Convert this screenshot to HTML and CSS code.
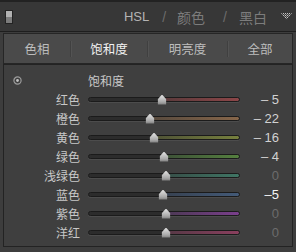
FILE: index.html
```html
<!DOCTYPE html>
<html lang="zh-CN">
<head>
    <meta charset="UTF-8">
    <meta name="viewport" content="width=device-width, initial-scale=1.0">
    <title>HSL</title>
    <link rel="stylesheet" href="styles.css">
</head>
<body>
    <!-- Panel header -->
    <div class="header">
        <span class="toggle"></span>
        <div class="title">
            <span class="active">HSL</span>
            <span class="slash first">/</span>
            <span>颜色</span>
            <span class="slash">/</span>
            <span>黑白</span>
            <svg class="collapse" width="11" height="7" viewBox="0 0 11 7">
                <defs>
                    <pattern id="dots" width="2" height="2" patternUnits="userSpaceOnUse">
                        <rect width="1" height="1" fill="#c4c4c4"/>
                        <rect x="1" y="1" width="1" height="1" fill="#8a8a8a"/>
                    </pattern>
                </defs>
                <polygon points="0,0 11,0 5.5,7" fill="url(#dots)"/>
            </svg>
        </div>
    </div>

    <!-- Tabs -->
    <div class="tabs">
        <div class="tab">色相</div>
        <div class="tab selected">饱和度</div>
        <div class="tab">明亮度</div>
        <div class="tab">全部</div>
    </div>

    <!-- Sliders -->
    <div class="panel">
        <div class="row">
            <div class="target">
                <svg width="9" height="9" viewBox="0 0 9 9">
                    <circle cx="4.5" cy="4.5" r="3.6" fill="none" stroke="#9c9c9c" stroke-width="1.2"/>
                    <circle cx="4.5" cy="4.5" r="1.4" fill="#c2c2c2"/>
                </svg>
            </div>
            <div class="group-title">饱和度</div>
            <div></div>
        </div>

        <div class="row">
            <div class="label">红色</div>
            <div class="track red" style="--pos: 73px"><span class="thumb"></span></div>
            <div class="value">– 5</div>
        </div>
        <div class="row">
            <div class="label">橙色</div>
            <div class="track orange" style="--pos: 61px"><span class="thumb"></span></div>
            <div class="value">– 22</div>
        </div>
        <div class="row">
            <div class="label">黄色</div>
            <div class="track yellow" style="--pos: 65px"><span class="thumb"></span></div>
            <div class="value">– 16</div>
        </div>
        <div class="row">
            <div class="label">绿色</div>
            <div class="track green" style="--pos: 75px"><span class="thumb"></span></div>
            <div class="value">– 4</div>
        </div>
        <div class="row">
            <div class="label">浅绿色</div>
            <div class="track aqua" style="--pos: 77px"><span class="thumb"></span></div>
            <div class="value zero">0</div>
        </div>
        <div class="row">
            <div class="label">蓝色</div>
            <div class="track blue" style="--pos: 74px"><span class="thumb"></span></div>
            <div class="value hot">–5</div>
        </div>
        <div class="row">
            <div class="label">紫色</div>
            <div class="track purple" style="--pos: 77px"><span class="thumb"></span></div>
            <div class="value zero">0</div>
        </div>
        <div class="row">
            <div class="label">洋红</div>
            <div class="track magenta" style="--pos: 77px"><span class="thumb"></span></div>
            <div class="value zero">0</div>
        </div>
    </div>
</body>
</html>
```

FILE: styles.css
```css
body {
    margin: 0;
    background-color: #3d3d3d;
    font-family: "Noto Sans CJK SC", "Liberation Sans", sans-serif;
    font-size: 12px;
    color: #c4c4c4;
}

/* header */
.header {
    height: 29px;
    border-top: 2px solid #222;
    border-bottom: 1px solid #1e1e1e;
    background-color: #373737;
    display: flex;
    align-items: center;
    justify-content: space-between;
    padding: 0 4px 0 5px;
}

.toggle {
    width: 6px;
    height: 12px;
    border: 1px solid #232323;
    background: linear-gradient(#b2b2b2 0 50%, #7c7c7c 50% 100%);
}

.title {
    display: flex;
    align-items: center;
    font-size: 14px;
    color: #7c7c7c;
}

.title .active {
    font-family: "Liberation Sans", sans-serif;
    font-size: 13px;
    color: #b4b4b4;
}

.slash {
    font-family: "Liberation Sans", sans-serif;
    margin: 0 12px 0 18px;
    color: #6c6c6c;
}

.slash.first {
    margin: 0 11px 0 13px;
}

.collapse {
    margin-left: 14px;
}

/* tabs */
.tabs {
    margin: 1px 3px 0;
    height: 29px;
    border: 1px solid #262626;
    background-color: #4a4a4a;
    display: grid;
    grid-template-columns: 66px 77px 80px 1fr;
    align-items: center;
}

.tab {
    text-align: center;
    font-size: 12.5px;
    color: #bdbdbd;
    border-left: 1px solid #404040;
    box-shadow: inset 1px 0 0 #535353;
    line-height: 16px;
}

.tab:first-child {
    border-left: none;
    box-shadow: none;
}

.tab.selected {
    color: #f2f2f2;
}

/* slider panel */
.panel {
    margin: 0 3px;
    border: 1px solid #232323;
    background-color: #3f3f3f;
    padding: 6px 13px 4px 0;
}

.row {
    display: grid;
    grid-template-columns: 76px 152px 1fr;
    column-gap: 8px;
    height: 19px;
    align-items: center;
}

.target {
    padding-left: 9px;
    display: flex;
}

.group-title {
    color: #c8c8c8;
}

.label {
    text-align: right;
    color: #c8c8c8;
}

.value {
    text-align: right;
    font-family: "Liberation Sans", sans-serif;
    font-size: 13px;
    color: #d2d2d2;
}

.value.zero {
    color: #6c6c6c;
}

.value.hot {
    color: #f4f4f4;
}

.track {
    position: relative;
    height: 3px;
    border: 1px solid #1b1b1b;
    border-radius: 3px;
    box-shadow: 0 1px 0 #4c4c4c;
    background: linear-gradient(to right, #2c2c2c 0 var(--pos), var(--c1) var(--pos), var(--c) 100%);
}

.red { --c1: #5a3a3b; --c: #8c4648; }
.orange { --c1: #574a3e; --c: #86664a; }
.yellow { --c1: #4f5236; --c: #76803e; }
.green { --c1: #3d5137; --c: #55803f; }
.aqua { --c1: #374f48; --c: #3f7564; }
.blue { --c1: #374150; --c: #435a78; }
.purple { --c1: #4c3954; --c: #7a3f8c; }
.magenta { --c1: #553845; --c: #8a3f5e; }

.thumb {
    position: absolute;
    left: var(--pos);
    top: 50%;
    width: 9px;
    height: 10px;
    transform: translate(-50%, -50%);
    background: linear-gradient(#e2e2e2, #a8a8a8 70%, #7a7a7a);
    clip-path: polygon(50% 0, 100% 50%, 100% 100%, 0 100%, 0 50%);
}
```
